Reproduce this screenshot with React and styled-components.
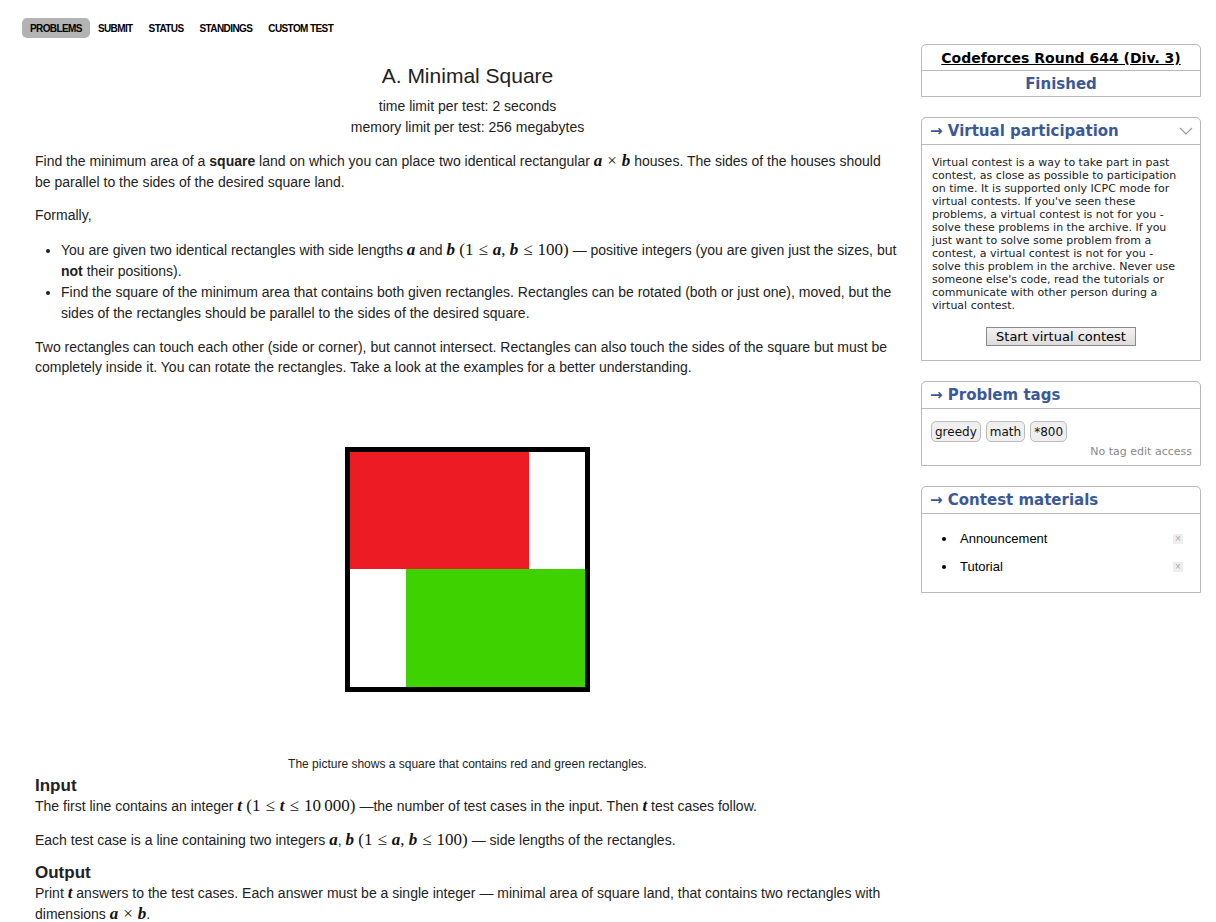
import React from "react";
import styled, { createGlobalStyle } from "styled-components";

const Global = createGlobalStyle`
  html, body { margin: 0; padding: 0; background: #fff; }
  body { font-family: "Liberation Sans", Arial, sans-serif; color: #222; }
`;

const Page = styled.div`
  padding: 18px 15px 0 22px;
`;

const Nav = styled.nav`
  display: flex;
  align-items: center;
  height: 20px;
`;

const NavItem = styled.a`
  display: flex;
  align-items: center;
  height: 20px;
  padding: 0 8px;
  border-radius: 5px;
  font-family: "Liberation Sans", Arial, sans-serif;
  font-weight: bold;
  font-size: 10px;
  letter-spacing: -0.6px;
  color: #000;
  text-transform: uppercase;
  background: ${(p) => (p.$active ? "#b3b3b3" : "transparent")};
`;

const Columns = styled.div`
  display: flex;
  align-items: flex-start;
  margin-top: 6px;
`;

const Main = styled.main`
  width: 865px;
  margin-left: 13px;
  font-size: 14px;
  line-height: 20.5px;
  color: #222;
`;

const Title = styled.h1`
  margin: 20px 0 0;
  text-align: center;
  font-weight: normal;
  font-size: 21px;
  line-height: 24px;
  color: #222;
`;

const Limits = styled.div`
  margin-top: 7.5px;
  text-align: center;
  font-size: 14px;
  line-height: 21px;
`;

const Statement = styled.div`
  margin-top: 13.5px;
`;

const P = styled.p`
  margin: 0 0 13px;
`;

const List = styled.ul`
  margin: 14px 0 13px;
  padding-left: 26px;
  line-height: 21px;
`;

const Item = styled.li`
  margin: 0;
`;

const MathSpan = styled.span`
  font-family: "Liberation Serif", "DejaVu Serif", serif;
  font-size: 17px;
  line-height: 1;
  color: #111;
  white-space: nowrap;
`;

const V = styled.i`
  font-weight: bold;
`;

const N = styled.span``;

const Op = styled.span`
  padding: 0 5px;
`;

const Figure = styled.figure`
  margin: 0 0 4px;
  padding: 56px 0 0;
  display: flex;
  flex-direction: column;
  align-items: center;
`;

const Caption = styled.figcaption`
  margin-top: 65px;
  font-size: 12px;
  line-height: 15.5px;
  text-align: center;
  color: #222;
`;

const SectionTitle = styled.div`
  font-weight: bold;
  font-size: 17px;
  line-height: 20px;
  color: #222;
`;

const Side = styled.aside`
  width: 280px;
  margin-left: 21px;
  display: flex;
  flex-direction: column;
  gap: 20px;
  font-family: "DejaVu Sans", Verdana, sans-serif;
`;

const Box = styled.section`
  border: 1px solid #b9b9b9;
  border-radius: 5px 5px 0 0;
  background: #fff;
`;

const BoxHeader = styled.div`
  position: relative;
  height: 26px;
  display: flex;
  align-items: center;
  padding: 0 8px;
  border-bottom: 1px solid #b9b9b9;
  color: #3b5998;
  font-weight: bold;
  font-size: 15px;
  white-space: nowrap;
`;

const RoundLink = styled.div`
  height: 25px;
  display: flex;
  align-items: center;
  justify-content: center;
  border-bottom: 1px solid #b9b9b9;
  font-weight: bold;
  font-size: 14px;
  text-decoration: underline;
  color: #000;
`;

const Phase = styled.div`
  height: 25px;
  display: flex;
  align-items: center;
  justify-content: center;
  font-weight: bold;
  font-size: 15px;
  color: #3b5998;
`;

const Chevron = styled.svg`
  position: absolute;
  right: 7px;
  top: 9px;
`;

const BoxBody = styled.div`
  padding: ${(p) => p.$pad || "10px 10px 16px 10px"};
`;

const SmallText = styled.div`
  padding-right: 8px;
  font-size: 11px;
  line-height: 13px;
  color: #222;
`;

const ButtonRow = styled.div`
  display: flex;
  justify-content: center;
  margin-top: 15px;
`;

const Button = styled.button`
  height: 19px;
  width: 150px;
  padding: 0;
  font-family: "DejaVu Sans", Verdana, sans-serif;
  font-size: 13px;
  color: #000;
  border: 1px solid #8a8a8a;
  border-radius: 0;
  background: linear-gradient(#f2f2f2, #dcdcdc);
`;

const Tags = styled.div`
  display: flex;
  gap: 5px;
`;

const Tag = styled.span`
  height: 19px;
  display: inline-flex;
  align-items: center;
  padding: 0 3px;
  border: 1px solid #bbb;
  border-radius: 5px;
  background: #efefef;
  font-size: 12px;
  color: #111;
`;

const NoEdit = styled.div`
  margin-top: 3px;
  text-align: right;
  font-size: 11px;
  line-height: 13px;
  color: #888;
`;

const Materials = styled.ul`
  margin: 0;
  padding: 0 0 0 35px;
  font-family: "Liberation Sans", Arial, sans-serif;
  font-size: 13px;
`;

const Material = styled.li`
  height: 28px;
  line-height: 28px;
  padding-left: 3px;
  color: #000;
`;

const MatRow = styled.span`
  display: flex;
  justify-content: space-between;
  align-items: center;
  padding-right: 17px;
`;

const Cross = styled.span`
  width: 10px;
  height: 10px;
  display: inline-flex;
  align-items: center;
  justify-content: center;
  background: #eee;
  color: #aaa;
  font-size: 10px;
  line-height: 10px;
`;

const M = ({ children }) => <MathSpan>{children}</MathSpan>;

function Picture() {
  return (
    <svg width="245" height="245" viewBox="0 0 245 245">
      <rect x="2.5" y="2.5" width="240" height="240" fill="#fff" stroke="#000" strokeWidth="5" />
      <rect x="5" y="5" width="179" height="117" fill="#ed1c24" />
      <rect x="61" y="122" width="179" height="118" fill="#3dd200" />
    </svg>
  );
}

export default function App() {
  return (
    <>
      <Global />
      <Page>
        <Nav>
          <NavItem $active>Problems</NavItem>
          <NavItem>Submit</NavItem>
          <NavItem>Status</NavItem>
          <NavItem>Standings</NavItem>
          <NavItem>Custom test</NavItem>
        </Nav>
        <Columns>
          <Main>
            <Title>A. Minimal Square</Title>
            <Limits>
              time limit per test: 2 seconds
              <br />
              memory limit per test: 256 megabytes
            </Limits>
            <Statement>
              <P>
                Find the minimum area of a <b>square</b> land on which you can place two identical rectangular{" "}
                <M>
                  <V>a</V>
                  <Op>×</Op>
                  <V>b</V>
                </M>{" "}
                houses. The sides of the houses should be parallel to the sides of the desired square land.
              </P>
              <P>Formally,</P>
              <List>
                <Item>
                  You are given two identical rectangles with side lengths{" "}
                  <M>
                    <V>a</V>
                  </M>{" "}
                  and{" "}
                  <M>
                    <V>b</V> (<N>1</N>
                    <Op>≤</Op>
                    <V>a</V>, <V>b</V>
                    <Op>≤</Op>
                    <N>100</N>)
                  </M>{" "}
                  — positive integers (you are given just the sizes, but <b>not</b> their positions).
                </Item>
                <Item>
                  Find the square of the minimum area that contains both given rectangles. Rectangles can be rotated
                  (both or just one), moved, but the sides of the rectangles should be parallel to the sides of the
                  desired square.
                </Item>
              </List>
              <P>
                Two rectangles can touch each other (side or corner), but cannot intersect. Rectangles can also touch
                the sides of the square but must be completely inside it. You can rotate the rectangles. Take a look at
                the examples for a better understanding.
              </P>
              <Figure>
                <Picture />
                <Caption>The picture shows a square that contains red and green rectangles.</Caption>
              </Figure>
              <SectionTitle>Input</SectionTitle>
              <P>
                The first line contains an integer{" "}
                <M>
                  <V>t</V> (<N>1</N>
                  <Op>≤</Op>
                  <V>t</V>
                  <Op>≤</Op>
                  <N>10&#8201;000</N>)
                </M>{" "}
                —the number of test cases in the input. Then{" "}
                <M>
                  <V>t</V>
                </M>{" "}
                test cases follow.
              </P>
              <P>
                Each test case is a line containing two integers{" "}
                <M>
                  <V>a</V>
                </M>
                ,{" "}
                <M>
                  <V>b</V> (<N>1</N>
                  <Op>≤</Op>
                  <V>a</V>, <V>b</V>
                  <Op>≤</Op>
                  <N>100</N>)
                </M>{" "}
                — side lengths of the rectangles.
              </P>
              <SectionTitle>Output</SectionTitle>
              <P>
                Print{" "}
                <M>
                  <V>t</V>
                </M>{" "}
                answers to the test cases. Each answer must be a single integer — minimal area of square land, that
                contains two rectangles with dimensions{" "}
                <M>
                  <V>a</V>
                  <Op>×</Op>
                  <V>b</V>
                </M>
                .
              </P>
            </Statement>
          </Main>
          <Side>
            <Box>
              <RoundLink>Codeforces Round 644 (Div. 3)</RoundLink>
              <Phase>Finished</Phase>
            </Box>
            <Box>
              <BoxHeader>
                → Virtual participation
                <Chevron width="14" height="9" viewBox="0 0 14 9">
                  <path d="M1 1 L7 7 L13 1" fill="none" stroke="#9a9a9a" strokeWidth="1.2" />
                </Chevron>
              </BoxHeader>
              <BoxBody $pad="11px 10px 14px 10px">
                <SmallText>
                  Virtual contest is a way to take part in past contest, as close as possible to participation on time.
                  It is supported only ICPC mode for virtual contests. If you've seen these problems, a virtual contest
                  is not for you - solve these problems in the archive. If you just want to solve some problem from a
                  contest, a virtual contest is not for you - solve this problem in the archive. Never use someone
                  else's code, read the tutorials or communicate with other person during a virtual contest.
                </SmallText>
                <ButtonRow>
                  <Button>Start virtual contest</Button>
                </ButtonRow>
              </BoxBody>
            </Box>
            <Box>
              <BoxHeader>→ Problem tags</BoxHeader>
              <BoxBody $pad="12px 8px 7px 9px">
                <Tags>
                  <Tag>greedy</Tag>
                  <Tag>math</Tag>
                  <Tag>*800</Tag>
                </Tags>
                <NoEdit>No tag edit access</NoEdit>
              </BoxBody>
            </Box>
            <Box>
              <BoxHeader>→ Contest materials</BoxHeader>
              <BoxBody $pad="11px 0 11px 0">
                <Materials>
                  <Material>
                    <MatRow>
                      Announcement <Cross>×</Cross>
                    </MatRow>
                  </Material>
                  <Material>
                    <MatRow>
                      Tutorial <Cross>×</Cross>
                    </MatRow>
                  </Material>
                </Materials>
              </BoxBody>
            </Box>
          </Side>
        </Columns>
      </Page>
    </>
  );
}
